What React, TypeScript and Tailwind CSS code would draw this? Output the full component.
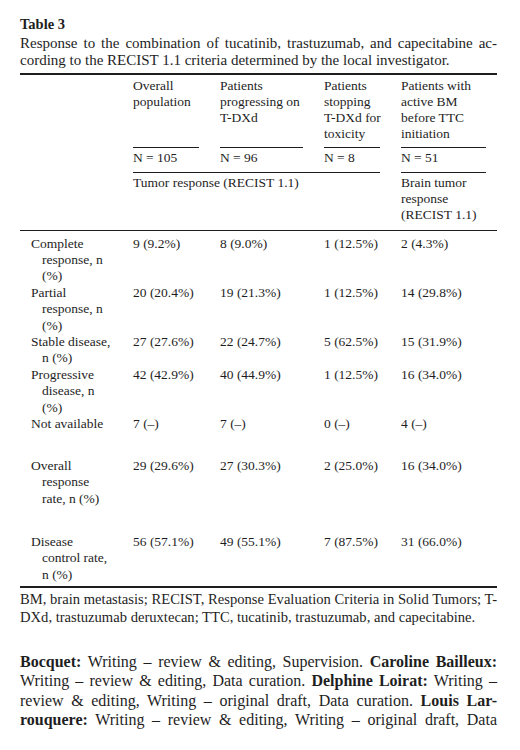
const header = [
  ["Overall", "population"],
  ["Patients", "progressing on", "T-DXd"],
  ["Patients", "stopping", "T-DXd for", "toxicity"],
  ["Patients with", "active BM", "before TTC", "initiation"],
];

const rows = [
  { label: ["Complete", "response, n", "(%)"], values: ["9 (9.2%)", "8 (9.0%)", "1 (12.5%)", "2 (4.3%)"] },
  { label: ["Partial", "response, n", "(%)"], values: ["20 (20.4%)", "19 (21.3%)", "1 (12.5%)", "14 (29.8%)"] },
  { label: ["Stable disease,", "n (%)"], values: ["27 (27.6%)", "22 (24.7%)", "5 (62.5%)", "15 (31.9%)"] },
  { label: ["Progressive", "disease, n", "(%)"], values: ["42 (42.9%)", "40 (44.9%)", "1 (12.5%)", "16 (34.0%)"] },
  { label: ["Not available"], values: ["7 (–)", "7 (–)", "0 (–)", "4 (–)"], extra: "pb-[25.5px]" },
  { label: ["Overall", "response", "rate, n (%)"], values: ["29 (29.6%)", "27 (30.3%)", "2 (25.0%)", "16 (34.0%)"], extra: "pb-[26.5px]" },
  { label: ["Disease", "control rate,", "n (%)"], values: ["56 (57.1%)", "49 (55.1%)", "7 (87.5%)", "31 (66.0%)"] },
];

const cols = "grid grid-cols-[113px_87px_104px_77px_1fr]";

const Lines = ({ lines }: { lines: string[] }) => (
  <div>
    {lines.map((l, i) => (
      <div key={i} className="whitespace-nowrap">
        {l}
      </div>
    ))}
  </div>
);

export default function App() {
  return (
    <div className="min-h-[750px] bg-white text-[#1e1e1e] font-['Liberation_Serif',serif] pl-[20px] pr-[23px] pt-[16px]">
      <div className="text-[14.5px] leading-[17px] font-bold">Table 3</div>
      <div className="text-[15px] leading-[17px] mt-[1.5px]">
        <div className="text-justify [text-align-last:justify] whitespace-nowrap">
          Response to the combination of tucatinib, trastuzumab, and capecitabine ac-
        </div>
        <div>cording to the RECIST 1.1 criteria determined by the local investigator.</div>
      </div>
      <div className="mt-[4.5px] h-[1.5px] bg-[#1e1e1e]" />

      <div className="text-[13.5px]">
        <div className={`${cols} leading-[16px] pt-[3.9px] pb-[4.6px]`}>
          <div />
          {header.map((h, i) => (
            <Lines key={i} lines={h} />
          ))}
        </div>
        <div className={cols}>
          <div className="col-start-2 mr-[21px] h-px bg-[#1e1e1e]" />
          <div className="mr-[21px] h-px bg-[#1e1e1e]" />
          <div className="mr-[21px] h-px bg-[#1e1e1e]" />
          <div className="w-[85px] h-px bg-[#1e1e1e]" />
        </div>
        <div className={`${cols} leading-[16px] pt-[2.4px] pb-[5.6px]`}>
          <div />
          <div>N = 105</div>
          <div>N = 96</div>
          <div>N = 8</div>
          <div>N = 51</div>
        </div>
        <div className={cols}>
          <div className="col-start-2 col-span-3 mr-[21px] h-px bg-[#1e1e1e]" />
          <div className="w-[85px] h-px bg-[#1e1e1e]" />
        </div>
        <div className={`${cols} leading-[16px] pt-[2.4px] pb-[6.6px]`}>
          <div className="col-start-2 col-span-3 whitespace-nowrap">Tumor response (RECIST 1.1)</div>
          <Lines lines={["Brain tumor", "response", "(RECIST 1.1)"]} />
        </div>
        <div className="h-[1.5px] bg-[#1e1e1e]" />

        <div className="pt-[4.2px] pb-[3.3px] leading-[16.4px]">
          {rows.map((r, i) => (
            <div key={i} className={`${cols} ${r.extra ?? ""}`}>
              <div className="pl-[11px]">
                {r.label.map((l, j) => (
                  <div key={j} className={`whitespace-nowrap ${j > 0 ? "pl-[11px]" : ""}`}>
                    {l}
                  </div>
                ))}
              </div>
              {r.values.map((v, j) => (
                <div key={j} className="whitespace-nowrap">
                  {v}
                </div>
              ))}
            </div>
          ))}
        </div>
        <div className="h-[1.5px] bg-[#1e1e1e]" />
      </div>

      <div className="text-[14.6px] leading-[18px] pt-[2.6px]">
        <div className="text-justify [text-align-last:justify] whitespace-nowrap">
          BM, brain metastasis; RECIST, Response Evaluation Criteria in Solid Tumors; T-
        </div>
        <div>DXd, trastuzumab deruxtecan; TTC, tucatinib, trastuzumab, and capecitabine.</div>
      </div>

      <div className="text-[16px] leading-[19.4px] mt-[25.7px]">
        <div className="text-justify [text-align-last:justify] whitespace-nowrap">
          <b>Bocquet:</b> Writing – review &amp; editing, Supervision. <b>Caroline Bailleux:</b>
        </div>
        <div className="text-justify [text-align-last:justify] whitespace-nowrap">
          Writing – review &amp; editing, Data curation. <b>Delphine Loirat:</b> Writing –
        </div>
        <div className="text-justify [text-align-last:justify] whitespace-nowrap">
          review &amp; editing, Writing – original draft, Data curation. <b>Louis Lar-</b>
        </div>
        <div className="text-justify [text-align-last:justify] whitespace-nowrap">
          <b>rouquere:</b> Writing – review &amp; editing, Writing – original draft, Data
        </div>
      </div>
    </div>
  );
}
